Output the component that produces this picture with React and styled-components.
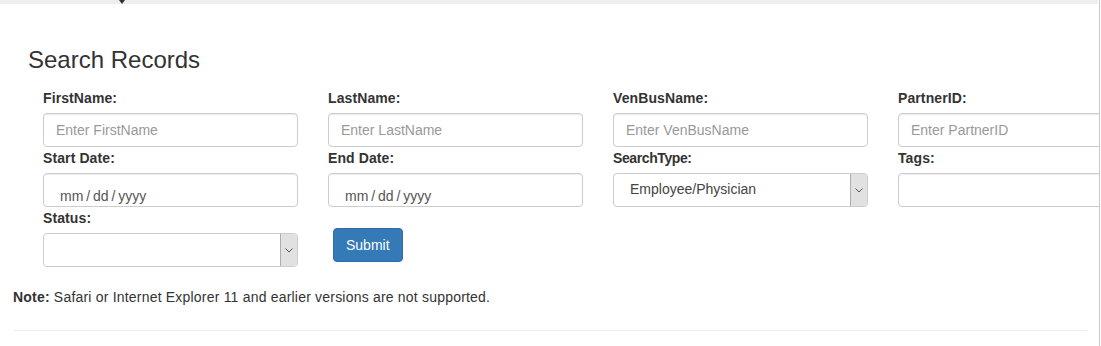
import React from "react";
import styled, { createGlobalStyle } from "styled-components";

const GlobalStyle = createGlobalStyle`
  html, body { margin: 0; padding: 0; background: #fff; }
  body {
    font-family: "Liberation Sans", Arial, sans-serif;
    font-size: 14px;
    line-height: 1.42857;
    color: #333;
  }
  * { box-sizing: border-box; }
`;

const Page = styled.div`
  width: 1100px;
  height: 346px;
  overflow: hidden;
  border-right: 1px solid #c8c8c8;
  position: relative;
`;

const TopBar = styled.div`
  width: 1098px;
  height: 4px;
  background: #eeeeee;
  position: relative;
`;

const Caret = styled.span`
  position: absolute;
  left: 119px;
  top: 0;
  width: 0;
  height: 0;
  border-left: 3px solid transparent;
  border-right: 3px solid transparent;
  border-top: 4px solid #2a3340;
`;

const Container = styled.div`
  width: 1099px;
  padding: 0 12px 0 13px;
`;

const Title = styled.h3`
  margin: 43px 0 0;
  padding-left: 15px;
  font-size: 24px;
  font-weight: 500;
  line-height: 26.4px;
  color: #333;
`;

const FormGrid = styled.div`
  margin-top: 15px;
  padding-left: 30px;
  display: grid;
  grid-template-columns: repeat(4, 285px);
  row-gap: 1px;
  width: 1200px;
`;

const Group = styled.div`
  display: flex;
  flex-direction: column;
  align-items: flex-start;
`;

const Label = styled.label`
  display: inline-block;
  font-weight: bold;
  line-height: 20px;
  margin-bottom: 5px;
  letter-spacing: ${(p) => (p.$tight ? "-0.4px" : "0.1px")};
`;

const Input = styled.input`
  width: 255px;
  height: 34px;
  padding: 6px 12px;
  font-family: inherit;
  font-size: 14px;
  color: #555;
  border: 1px solid #ccc;
  border-radius: 4px;
  background: #fff;
  box-shadow: inset 0 1px 1px rgba(0, 0, 0, 0.075);
  outline: none;
  &::placeholder { color: #999; }
`;

const DateField = styled.div`
  width: 255px;
  height: 34px;
  padding: 14px 16px 0;
  font-size: 14px;
  line-height: 16px;
  color: #555;
  border: 1px solid #ccc;
  border-radius: 4px;
  box-shadow: inset 0 1px 1px rgba(0, 0, 0, 0.075);
  word-spacing: -1px;
`;

const SelectBox = styled.div`
  width: 255px;
  height: 34px;
  display: flex;
  align-items: stretch;
  border: 1px solid #ccc;
  border-radius: 4px;
  overflow: hidden;
  background: #fff;
`;

const SelectValue = styled.div`
  flex: 1;
  display: flex;
  align-items: center;
  padding-left: 16px;
  font-size: 14px;
  color: #444;
`;

const ArrowBox = styled.div`
  width: 17px;
  display: flex;
  align-items: center;
  justify-content: center;
  background: #e1e1e1;
  border-left: 1px solid #adadad;
`;

const SubmitButton = styled.button`
  margin: 20px 0 0 5px;
  height: 34px;
  padding: 6px 12px;
  font-family: inherit;
  font-size: 14px;
  line-height: 20px;
  color: #fff;
  background: #337ab7;
  border: 1px solid #2e6da4;
  border-radius: 4px;
  cursor: pointer;
`;

const Note = styled.p`
  margin: 20px 0 0;
  line-height: 20px;
  color: #333;
  letter-spacing: 0.2px;
`;

const Rule = styled.hr`
  margin: 23px 0 0;
  border: 0;
  border-top: 1px solid #eee;
`;

const Chevron = () => (
  <svg width="8" height="5" viewBox="0 0 8 5">
    <path d="M0.5 0.5 L4 4 L7.5 0.5" fill="none" stroke="#555" strokeWidth="1" />
  </svg>
);

const Select = ({ value }) => (
  <SelectBox>
    <SelectValue>{value}</SelectValue>
    <ArrowBox>
      <Chevron />
    </ArrowBox>
  </SelectBox>
);

export default function App() {
  return (
    <>
      <GlobalStyle />
      <Page>
        <TopBar>
          <Caret />
        </TopBar>
        <Container>
          <Title>Search Records</Title>
          <FormGrid>
            <Group>
              <Label>FirstName:</Label>
              <Input placeholder="Enter FirstName" />
            </Group>
            <Group>
              <Label>LastName:</Label>
              <Input placeholder="Enter LastName" />
            </Group>
            <Group>
              <Label>VenBusName:</Label>
              <Input placeholder="Enter VenBusName" />
            </Group>
            <Group>
              <Label>PartnerID:</Label>
              <Input placeholder="Enter PartnerID" />
            </Group>

            <Group>
              <Label>Start Date:</Label>
              <DateField>mm / dd / yyyy</DateField>
            </Group>
            <Group>
              <Label>End Date:</Label>
              <DateField>mm / dd / yyyy</DateField>
            </Group>
            <Group>
              <Label $tight>SearchType:</Label>
              <Select value="Employee/Physician" />
            </Group>
            <Group>
              <Label>Tags:</Label>
              <Input />
            </Group>

            <Group>
              <Label>Status:</Label>
              <Select value="" />
            </Group>
            <Group>
              <SubmitButton type="button">Submit</SubmitButton>
            </Group>
          </FormGrid>
          <Note>
            <b>Note:</b> Safari or Internet Explorer 11 and earlier versions are not supported.
          </Note>
          <Rule />
        </Container>
      </Page>
    </>
  );
}
